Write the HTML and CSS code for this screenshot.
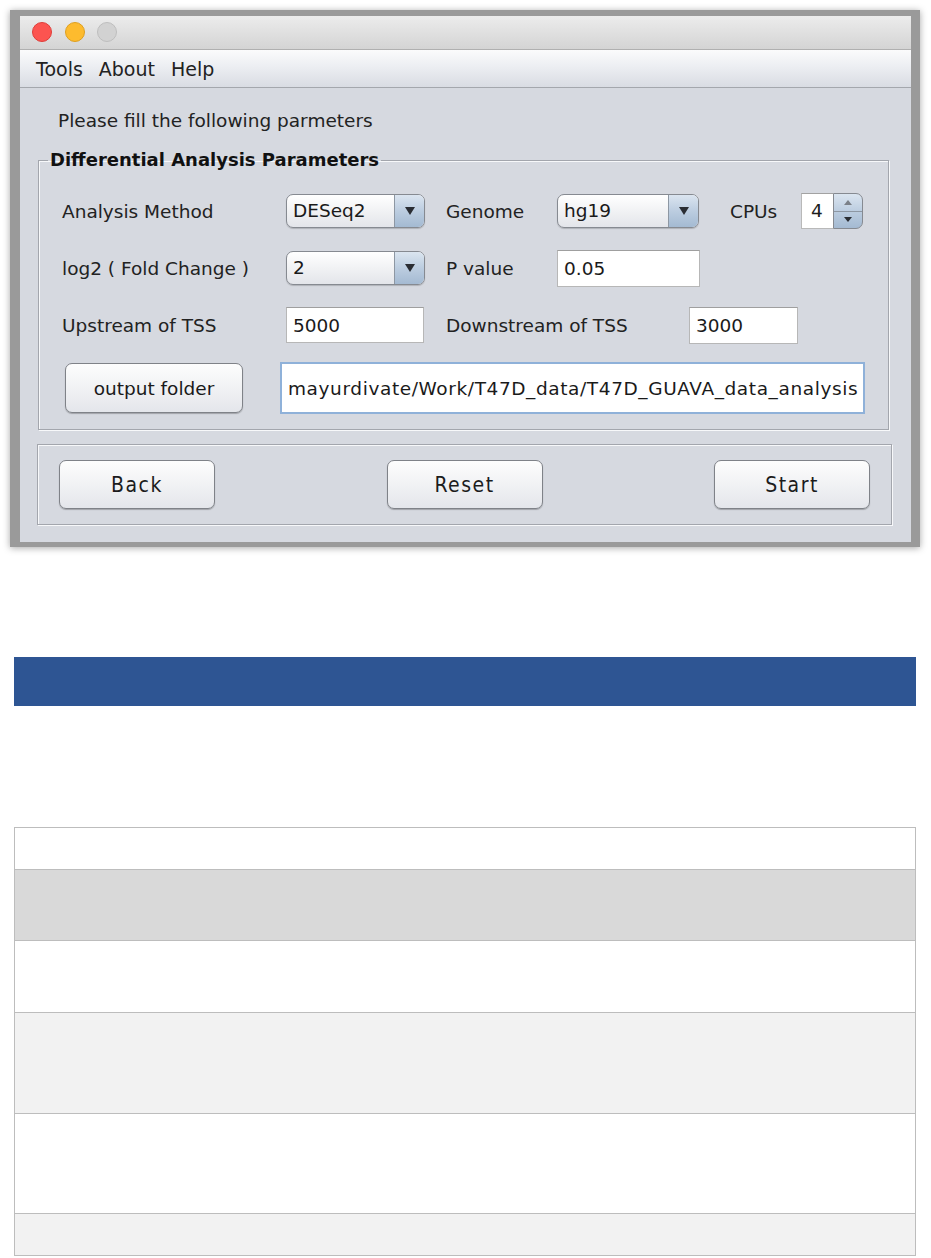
FILE: index.html
```html
<!DOCTYPE html>
<html>
<head>
<meta charset="utf-8">
<link rel="stylesheet" href="styles.css">
</head>
<body>
<div class="window">
  <div class="titlebar">
    <span class="light red"></span>
    <span class="light yellow"></span>
    <span class="light grey"></span>
  </div>
  <div class="menubar">
    <span class="menu-item">Tools</span>
    <span class="menu-item">About</span>
    <span class="menu-item">Help</span>
  </div>
  <div class="content">
    <div class="intro">Please fill the following parmeters</div>
    <fieldset class="group">
      <legend>Differential Analysis Parameters</legend>
      <div class="row">
        <span class="label w224">Analysis Method</span>
        <div class="combo w139"><span class="combo-text">DESeq2</span><span class="combo-arrow"><span class="tri-down"></span></span></div>
        <span class="label w111 ml21">Genome</span>
        <div class="combo w142"><span class="combo-text">hg19</span><span class="combo-arrow"><span class="tri-down"></span></span></div>
        <span class="label w71 ml31">CPUs</span>
        <div class="spinner">
          <span class="spin-field">4</span>
          <span class="spin-buttons">
            <span class="spin-btn"><span class="tri-up"></span></span>
            <span class="spin-btn"><span class="tri-down small"></span></span>
          </span>
        </div>
      </div>
      <div class="row">
        <span class="label w224">log2 ( Fold Change )</span>
        <div class="combo w139"><span class="combo-text">2</span><span class="combo-arrow"><span class="tri-down"></span></span></div>
        <span class="label w111 ml21">P value</span>
        <div class="field w143 h37">0.05</div>
      </div>
      <div class="row">
        <span class="label w224">Upstream of TSS</span>
        <div class="field w138 h36">5000</div>
        <span class="label w243 ml22">Downstream of TSS</span>
        <div class="field w109 h37">3000</div>
      </div>
      <div class="row row-last">
        <button class="btn btn-folder">output folder</button>
        <div class="field field-focus">mayurdivate/Work/T47D_data/T47D_GUAVA_data_analysis</div>
      </div>
    </fieldset>
    <div class="group2">
      <button class="btn btn-nav">Back</button>
      <button class="btn btn-nav">Reset</button>
      <button class="btn btn-nav">Start</button>
    </div>
  </div>
</div>

<div class="bluebar"></div>

<div class="table">
  <div class="trow r1"></div>
  <div class="trow r2"></div>
  <div class="trow r3"></div>
  <div class="trow r4"></div>
  <div class="trow r5"></div>
  <div class="trow r6"></div>
</div>
</body>
</html>
```
FILE: styles.css
```css
* { box-sizing: border-box; }
html, body { margin: 0; padding: 0; background: #ffffff; }
body {
  font-family: "DejaVu Sans", "Liberation Sans", sans-serif;
  color: #1e1e1e;
  width: 931px;
  height: 1258px;
  overflow: hidden;
  padding-top: 10px;
}

/* ---------- window ---------- */
.window {
  margin-left: 10px;
  width: 910px;
  border-style: solid;
  border-color: #9a9a9a;
  border-width: 6px 9px 5px 10px;
  box-shadow: 0 1px 7px rgba(0,0,0,0.35);
  background: #d6d9e0;
}

.titlebar {
  height: 34px;
  background: linear-gradient(#ececec, #d4d4d4);
  border-bottom: 1px solid #b0b0b0;
  display: flex;
  align-items: flex-start;
  padding: 6px 0 0 12px;
  gap: 12.5px;
}
.light {
  width: 20px;
  height: 20px;
  border-radius: 50%;
  display: block;
}
.light.red { background: #fc5450; border: 1px solid #df3d39; }
.light.yellow { background: #fdbb2e; border: 1px solid #de9f1f; }
.light.grey { background: #d2d2d2; border: 1px solid #bebebe; }

.menubar {
  height: 38px;
  background: linear-gradient(#fbfbfc, #eceef2 45%, #d9dce3);
  border-bottom: 1px solid #a4a7ad;
  display: flex;
  align-items: center;
  padding-left: 8px;
  font-size: 19px;
  color: #222;
}
.menu-item { padding: 0 8px; line-height: 24px; }

.content {
  padding: 21px 19px 17px 17px;
  font-size: 18.5px;
}
.intro {
  line-height: 24px;
  padding-left: 21px;
  color: #222;
}

/* ---------- parameter group ---------- */
.group {
  margin: 16px 3px 0 1px;
  padding: 21px 0 15px 23px;
  border: 1px solid #a3a6ad;
  box-shadow: inset 1px 1px 0 #f7f8fa, 1px 1px 0 #f7f8fa;
  min-inline-size: 0;
}
.group legend {
  font-weight: bold;
  font-size: 18px;
  line-height: 22px;
  padding: 0 2px;
  margin-left: -14px;
  color: #111;
}
.row {
  display: flex;
  align-items: center;
  height: 38px;
  margin-bottom: 19px;
}
.row:nth-child(4) { margin-bottom: 18px; }
.row-last { height: 52px; margin-bottom: 0; }

.label { display: block; white-space: nowrap; color: #222; }
.w224 { width: 224px; }
.w111 { width: 111px; }
.w71 { width: 71px; }
.w243 { width: 243px; }
.ml21 { margin-left: 21px; }
.ml22 { margin-left: 22px; }
.ml31 { margin-left: 31px; }

.combo {
  height: 34px;
  display: flex;
  border: 1px solid #868a91;
  border-radius: 7px;
  overflow: hidden;
  background: linear-gradient(#ffffff, #f1f2f4 50%, #e3e5ea);
  box-shadow: 0 1px 1px rgba(0,0,0,0.18);
}
.w139 { width: 139px; }
.w142 { width: 142px; }
.combo-text {
  flex: 1;
  padding-left: 6px;
  line-height: 32px;
  color: #1a1a1a;
}
.combo-arrow {
  width: 30px;
  border-left: 1px solid #8d97a3;
  background: linear-gradient(#dbe5f0, #bccde0 50%, #a4bad2);
  display: flex;
  align-items: center;
  justify-content: center;
}
.tri-down {
  width: 0; height: 0;
  border-left: 5px solid transparent;
  border-right: 5px solid transparent;
  border-top: 8px solid #2a2d33;
}
.tri-down.small {
  border-left-width: 4px;
  border-right-width: 4px;
  border-top-width: 5px;
}
.tri-up {
  width: 0; height: 0;
  border-left: 4px solid transparent;
  border-right: 4px solid transparent;
  border-bottom: 5px solid #7b8088;
}

.spinner {
  display: flex;
  height: 36px;
  width: 62px;
}
.spin-field {
  width: 32px;
  background: #fff;
  border: 1px solid #b9b9b9;
  border-top-color: #a2a2a2;
  border-right: none;
  line-height: 34px;
  padding-left: 9px;
}
.spin-buttons {
  width: 30px;
  display: flex;
  flex-direction: column;
  border: 1px solid #868a91;
  border-radius: 0 7px 7px 0;
  overflow: hidden;
  background: linear-gradient(#dbe5f0, #bccde0 50%, #a4bad2);
}
.spin-btn {
  flex: 1;
  display: flex;
  align-items: center;
  justify-content: center;
}
.spin-btn + .spin-btn { border-top: 1px solid #8d97a3; }

.field {
  background: #ffffff;
  border: 1px solid #b7b7b7;
  border-top-color: #9f9f9f;
  padding-left: 6px;
  display: flex;
  align-items: center;
  white-space: nowrap;
  color: #1a1a1a;
}
.w143 { width: 143px; }
.w138 { width: 138px; }
.w109 { width: 109px; }
.h37 { height: 37px; }
.h36 { height: 36px; }
.field-focus {
  width: 585px;
  height: 52px;
  margin-left: 37px;
  border: 2px solid #8fb1d9;
  padding-left: 6px;
  letter-spacing: 0.6px;
}

.btn {
  font-family: "DejaVu Sans", "Liberation Sans", sans-serif;
  font-size: 18.5px;
  color: #1a1a1a;
  background: linear-gradient(#fdfdfd, #f1f2f4 50%, #e4e6eb);
  border: 1px solid #7f8288;
  border-radius: 7px;
  box-shadow: 0 1px 1px rgba(0,0,0,0.25);
  padding: 0;
  margin: 0;
}
.btn-folder {
  width: 178px;
  height: 50px;
  margin-left: 3px;
}

.group2 {
  margin: 14px 0 0 0;
  height: 81px;
  border: 1px solid #a3a6ad;
  box-shadow: inset 1px 1px 0 #f7f8fa, 1px 1px 0 #f7f8fa;
  padding: 15px 21px 14px 21px;
  display: flex;
  justify-content: space-between;
}
.btn-nav {
  width: 156px;
  height: 49px;
  font-family: "DejaVu Sans Condensed", "DejaVu Sans", sans-serif;
  font-stretch: condensed;
  font-size: 21px;
  letter-spacing: 1.5px;
  color: #1c1c1c;
}

/* ---------- blue bar ---------- */
.bluebar {
  margin: 110px 0 0 14px;
  width: 902px;
  height: 49px;
  background: #2e5593;
}

/* ---------- table ---------- */
.table {
  margin: 121px 0 0 14px;
  width: 902px;
  border: 1px solid #bdbdbd;
  border-bottom: none;
}
.trow { border-bottom: 1px solid #bdbdbd; }
.r1 { height: 42px; background: #ffffff; }
.r2 { height: 71px; background: #d9d9d9; }
.r3 { height: 72px; background: #ffffff; }
.r4 { height: 101px; background: #f2f2f2; }
.r5 { height: 100px; background: #ffffff; }
.r6 { height: 42px; background: #f2f2f2; }
```
